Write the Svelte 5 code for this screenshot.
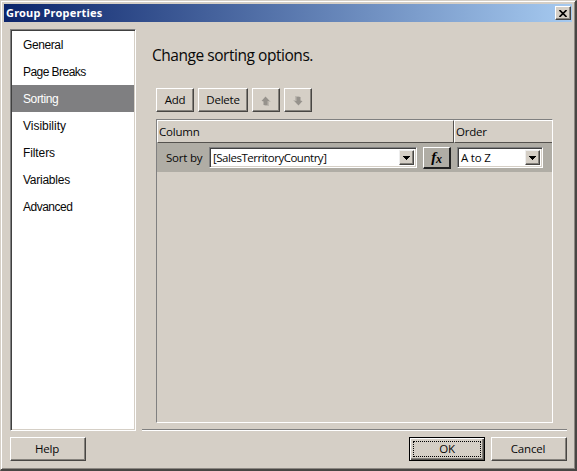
<script>
  const pages = [
    { name: 'General', tracking: -0.4 },
    { name: 'Page Breaks', tracking: -0.55 },
    { name: 'Sorting', tracking: -0.4 },
    { name: 'Visibility', tracking: -0.02 },
    { name: 'Filters', tracking: -0.1 },
    { name: 'Variables', tracking: -0.25 },
    { name: 'Advanced', tracking: -0.5 },
  ];
  let selected = $state('Sorting');
</script>

{#snippet combo(value, kind)}
  <div class="combo {kind}">
    <span class="value">{value}</span>
    <button class="drop" aria-label="Open list">
      <svg width="7" height="4" viewBox="0 0 7 4" shape-rendering="crispEdges"><path d="M0 0h7v1H6v1H5v1H4v1H3V3H2V2H1V1H0z" fill="#000" /></svg>
    </button>
  </div>
{/snippet}

{#snippet arrow(down)}
  <svg class="arrow" class:down width="10" height="10" viewBox="0 0 10 10">
    <path d="M5.5 1.5L10 6H8v4H3.5V6H1z" fill="#bcb7af" />
    <path d="M4.5 .5L8.5 5H6.5V9h-4V5H.5z" fill="#96928c" />
  </svg>
{/snippet}

<div class="window">
  <header class="title">
    <span class="caption">Group Properties</span>
    <button class="close" aria-label="Close">
      <svg width="8" height="7" viewBox="0 0 8 7"><path d="M.5 0L7.5 7M7.5 0L.5 7" stroke="#000" stroke-width="1.6" /></svg>
    </button>
  </header>

  <div class="body">
    <nav class="pages">
      {#each pages as page}
        <button
          class="page"
          class:selected={page.name === selected}
          style:letter-spacing="{page.tracking}px"
          onclick={() => (selected = page.name)}>{page.name}</button>
      {/each}
    </nav>
    <main class="content">
      <h1>Change sorting options.</h1>
      <div class="toolbar">
        <button class="btn add">Add</button>
        <button class="btn delete">Delete</button>
        <button class="btn move" aria-label="Move up">{@render arrow(false)}</button>
        <button class="btn move" aria-label="Move down">{@render arrow(true)}</button>
      </div>
      <div class="grid">
        <div class="head">
          <div class="cell column">Column</div>
          <div class="cell order">Order</div>
        </div>
        <div class="row">
          <span class="label">Sort by</span>
          {@render combo('[SalesTerritoryCountry]', 'field')}
          <button class="fx" aria-label="Expression"><i>f<sub>x</sub></i></button>
          {@render combo('A to Z', 'direction')}
        </div>
      </div>
      <div class="rule"></div>
    </main>
  </div>

  <footer>
    <button class="btn wide help">Help</button>
    <button class="btn wide ok"><span class="focus">OK</span></button>
    <button class="btn wide cancel">Cancel</button>
  </footer>
</div>

<style>
  .window, .window * { box-sizing: border-box; }
  .window {
    width: 577px;
    height: 471px;
    padding: 3px 2px 0 2px;
    border: 1px solid #d5cfc6;
    border-right: 2px solid #484643;
    border-bottom: 2px solid #484643;
    box-shadow: inset 1px 1px #fff, inset -1px -1px #8c8882;
    background: #d5cfc6;
    color: #080808;
    font: 11.5px/14px 'Open Sans', 'Noto Sans', sans-serif;
    letter-spacing: -.2px;
    overflow: hidden;
    display: flex;
    flex-direction: column;
  }
  button { margin: 0; padding: 0; border: 0; font: inherit; letter-spacing: inherit; color: inherit; border-radius: 0; background: #d5cfc6; }
  svg { display: block; }
  .title {
    flex: none;
    height: 18px;
    margin: 0 1px;
    padding: 0 1px 0 2px;
    display: flex;
    align-items: center;
    justify-content: space-between;
    background: linear-gradient(90deg, #0c256b, #a6caf0);
  }
  .caption { color: #fff; font: 700 11px/14px 'Noto Sans', sans-serif; letter-spacing: .18px; }
  .close {
    width: 16px;
    height: 14px;
    display: flex;
    align-items: center;
    justify-content: center;
    border: 1px solid #fff;
    border-right-color: #444;
    border-bottom-color: #444;
    box-shadow: inset -1px -1px #88847e;
  }
  .body { flex: none; display: flex; height: 409px; padding: 7px 0 0 7px; }
  .pages {
    width: 126px;
    height: 402px;
    border: 1px solid #808080;
    border-right-color: #fff;
    border-bottom-color: #fff;
    box-shadow: inset 1px 1px #404040, inset -1px -1px #d5cfc6;
    background: #fff;
    padding: 1px;
    display: flex;
    flex-direction: column;
  }
  .page {
    height: 27px;
    padding: 1px 0 0 11px;
    text-align: left;
    background: none;
    font: 12px/26px 'Liberation Sans', Arial, sans-serif;
  }
  .page.selected { background: #7f7f81; color: #fff; }
  .content { flex: none; width: 431px; padding-left: 6px; display: flex; flex-direction: column; }
  h1 { margin: 15px 0 0 10px; height: 22px; font-size: 15.5px; line-height: 22px; letter-spacing: -.46px; font-weight: 400; white-space: nowrap; }
  .toolbar { display: flex; gap: 4px; margin: 22px 0 0 14px; height: 24px; }
  .btn {
    height: 24px;
    display: flex;
    align-items: center;
    justify-content: center;
    border: 1px solid #fff;
    border-right-color: #484643;
    border-bottom-color: #484643;
    box-shadow: inset -1px -1px #85827c;
  }
  .add { width: 38px; }
  .delete { width: 50px; }
  .move { width: 28px; padding-top: 2px; }
  .down { transform: rotate(180deg); }
  .grid {
    width: 397px;
    height: 304px;
    margin: 7px 0 0 14px;
    border: 1px solid #808080;
    border-right-color: #fff;
    border-bottom-color: #fff;
  }
  .head { display: flex; height: 23px; }
  .cell {
    border: 1px solid #fff;
    border-right-color: #55524e;
    border-bottom: 1px solid #55524e;
    padding: 3px 0 0 1px;
    line-height: 15px;
  }
  .column { width: 297px; }
  .order { width: 98px; border-right: 0; }
  .row { display: flex; height: 29px; background: #b0ada5; align-items: center; }
  .label { width: 52px; padding-left: 9px; white-space: nowrap; }
  .combo {
    height: 21px;
    display: flex;
    justify-content: space-between;
    background: #fff;
    border: 1px solid #808080;
    border-right-color: #fff;
    border-bottom-color: #fff;
    box-shadow: inset 1px 1px #404040, inset -1px -1px #d5cfc6;
    padding: 2px;
  }
  .field { width: 208px; letter-spacing: -.48px; }
  .direction { width: 86px; }
  .value { padding-left: 1px; line-height: 15px; white-space: nowrap; }
  .drop {
    width: 15px;
    height: 15px;
    display: flex;
    align-items: center;
    justify-content: center;
    border: 1px solid #eee;
    border-right-color: #484643;
    border-bottom-color: #484643;
    box-shadow: inset -1px -1px #85827c;
  }
  .fx {
    width: 28px;
    height: 22px;
    margin: 0 6px;
    background: #b0ada5;
    border: 1px solid #fff;
    border-right: 2px solid #222;
    border-bottom: 2px solid #222;
    font: bold 15px/16px 'Liberation Serif', serif;
    color: #000;
  }
  .fx sub { font-size: 12px; line-height: 0; vertical-align: -1px; }
  .rule { margin-top: 6px; width: 425px; height: 2px; border-top: 1px solid #808080; border-bottom: 1px solid #fff; }
  footer { display: flex; padding: 6px 0 0 7px; }
  .wide { width: 76px; }
  .help { padding-right: 2px; }
  .ok { margin-left: 323px; border: 1px solid #000; box-shadow: inset 1px 1px #fff, inset -1px -1px #55524e, inset -2px -2px #85827c; }
  .focus { width: 68px; height: 16px; line-height: 14px; border: 1px dotted #000; }
  .cancel { margin-left: 6px; padding-right: 2px; }
</style>
